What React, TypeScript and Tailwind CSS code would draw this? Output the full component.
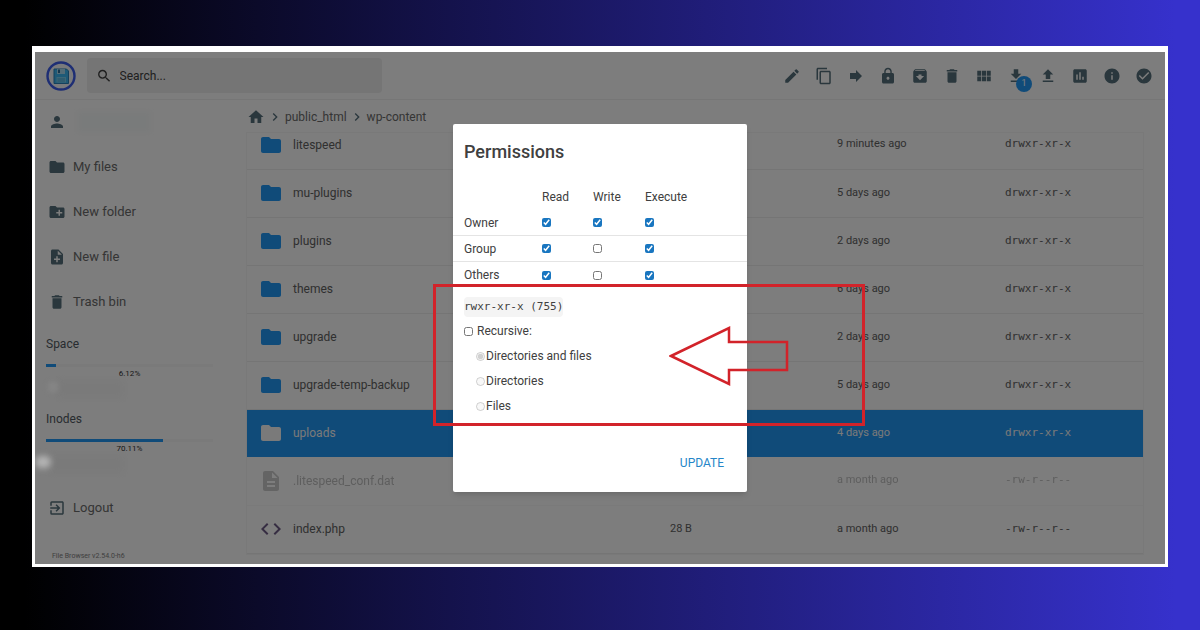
import type { ReactNode } from 'react';
import type { IconType } from 'react-icons';
import {
  MdArchive,
  MdCheckCircle,
  MdChevronRight,
  MdCode,
  MdContentCopy,
  MdCreateNewFolder,
  MdDelete,
  MdDescription,
  MdEdit,
  MdExitToApp,
  MdFileDownload,
  MdFileUpload,
  MdFolder,
  MdForward,
  MdHome,
  MdInfo,
  MdInsertChart,
  MdLock,
  MdNoteAdd,
  MdPerson,
  MdSearch,
  MdViewModule,
} from 'react-icons/md';

interface FileItem {
  name: string;
  kind: 'folder' | 'doc' | 'code';
  size?: string;
  modified: string;
  mode: string;
  selected?: boolean;
  hidden?: boolean;
}

const files: FileItem[] = [
  { name: 'litespeed', kind: 'folder', modified: '9 minutes ago', mode: 'drwxr-xr-x' },
  { name: 'mu-plugins', kind: 'folder', modified: '5 days ago', mode: 'drwxr-xr-x' },
  { name: 'plugins', kind: 'folder', modified: '2 days ago', mode: 'drwxr-xr-x' },
  { name: 'themes', kind: 'folder', modified: '6 days ago', mode: 'drwxr-xr-x' },
  { name: 'upgrade', kind: 'folder', modified: '2 days ago', mode: 'drwxr-xr-x' },
  { name: 'upgrade-temp-backup', kind: 'folder', modified: '5 days ago', mode: 'drwxr-xr-x' },
  { name: 'uploads', kind: 'folder', modified: '4 days ago', mode: 'drwxr-xr-x', selected: true },
  { name: '.litespeed_conf.dat', kind: 'doc', modified: 'a month ago', mode: '-rw-r--r--', hidden: true },
  { name: 'index.php', kind: 'code', size: '28 B', modified: 'a month ago', mode: '-rw-r--r--' },
];

const actions: { label: string; icon: IconType; badge?: number }[] = [
  { label: 'Rename', icon: MdEdit },
  { label: 'Copy', icon: MdContentCopy },
  { label: 'Move', icon: MdForward },
  { label: 'Permissions', icon: MdLock },
  { label: 'Archive', icon: MdArchive },
  { label: 'Delete', icon: MdDelete },
  { label: 'Switch view', icon: MdViewModule },
  { label: 'Download', icon: MdFileDownload, badge: 1 },
  { label: 'Upload', icon: MdFileUpload },
  { label: 'Usage', icon: MdInsertChart },
  { label: 'Info', icon: MdInfo },
  { label: 'Select', icon: MdCheckCircle },
];

const permissions = [
  { who: 'Owner', read: true, write: true, execute: true },
  { who: 'Group', read: true, write: false, execute: true },
  { who: 'Others', read: true, write: false, execute: true },
];

function Logo() {
  return (
    <svg viewBox="0 0 30 30" className="size-[30px] shrink-0" aria-hidden="true">
      <circle cx="15" cy="15" r="13.5" fill="#f2f4f8" stroke="#3c5ce8" strokeWidth="2.400" />
      <path d="M8 8h12.500l2 2v12.500h-14.500z" fill="#3cb4ee" stroke="#2a80b8" strokeWidth="1" />
      <path d="M11 8h8v5h-8z" fill="#a8d8ee" />
      <path d="M12 8.500h2v3.500h-2z" fill="#2a6c98" />
      <path d="M10.500 16h9.500v5.500h-9.500z" fill="#7accec" />
      <path d="M11.500 18h7.500M11.500 20h7.500" stroke="#3a9ccc" strokeWidth="0.800" />
    </svg>
  );
}

function NavItem({ icon: Icon, children }: { icon: IconType; children: ReactNode }) {
  return (
    <a href="#" className="flex h-[45px] items-center gap-[7px] pl-[13px] text-[13px] text-[#6a6a6a]">
      <Icon className="size-[18px] text-[#546e7a]" />
      {children}
    </a>
  );
}

function Usage({ label, percent }: { label: string; percent: number }) {
  return (
    <div className="pl-[11px] pr-[34px]">
      <p className="text-xs leading-4 text-[#505860]">{label}</p>
      <div className="mt-3 h-[3px] bg-[#f4f4f4]">
        <div className="h-full bg-[#2196f3]" style={{ width: `${percent}%` }} />
      </div>
      <p className="text-center text-[8px] leading-[14px] text-[#303030]">{percent}%</p>
    </div>
  );
}

function Sidebar() {
  return (
    <nav className="w-[212px] shrink-0">
      <div className="flex h-[44px] items-center gap-3 pl-[13px]">
        <MdPerson className="size-[18px] text-[#546e7a]" />
        <span className="h-5 w-18 bg-[#f3f6f6] blur-[2px]" />
      </div>
      <NavItem icon={MdFolder}>My files</NavItem>
      <NavItem icon={MdCreateNewFolder}>New folder</NavItem>
      <NavItem icon={MdNoteAdd}>New file</NavItem>
      <NavItem icon={MdDelete}>Trash bin</NavItem>
      <div className="pt-3">
        <Usage label="Space" percent={6.12} />
        <div className="flex h-[30px] items-start pl-3">
          <span className="relative z-20 size-3 rounded-full bg-[#848484] blur-[2px]" />
          <span className="h-4 w-16 bg-[#f4f4f4] blur-[3px]" />
        </div>
        <Usage label="Inodes" percent={70.11} />
      </div>
      <div className="flex h-[29px] items-start">
        {/* smudge stays brighter than the dimmed page */}
        <span className="relative z-20 h-3 w-4 rounded-full bg-[#b4b4b4] blur-[3px]" />
        <span className="h-4 w-18 bg-[#f4f4f4] blur-[3px]" />
      </div>
      <NavItem icon={MdExitToApp}>Logout</NavItem>
      <p className="mt-5 pl-[17px] text-[7px] leading-3 text-[#808080]">File Browser v2.54.0-h6</p>
    </nav>
  );
}

function Breadcrumbs() {
  return (
    <div className="flex h-[33px] items-center gap-0.5 text-xs text-[#6a6a6a]">
      <a href="#" aria-label="Home">
        <MdHome className="size-[18px] text-[#546e7a]" />
      </a>
      <MdChevronRight className="size-4 text-[#546e7a]" />
      <a href="#">public_html</a>
      <MdChevronRight className="size-4 text-[#546e7a]" />
      <a href="#">wp-content</a>
    </div>
  );
}

function FileIcon({ item }: { item: FileItem }) {
  if (item.kind === 'doc') return <MdDescription className="size-6 text-[#808080]" />;
  if (item.kind === 'code') return <MdCode className="size-6 text-[#6c5a84]" />;
  return <MdFolder className={item.selected ? 'size-6 text-[#f4f4f4]' : 'size-6 text-[#2196f3]'} />;
}

function rowClass(item: FileItem) {
  if (item.selected) return 'h-12 bg-[#2196f3] text-[#f4f4f4]';
  if (item.hidden) return 'h-12 border-b border-[#f4f4f4] text-[#606060]';
  return 'h-12 border-b border-[#eaeaea] text-[#606060]';
}

function Listing() {
  return (
    <div className="overflow-hidden ring-1 ring-[#f3f3f3]">
      {/* scrolled a little, so the first row is partly under the breadcrumbs */}
      <table className="-mt-3 w-full table-fixed border-collapse text-left text-xs">
        <colgroup>
          <col />
          <col className="w-[167px]" />
          <col className="w-[168px]" />
          <col className="w-[138px]" />
        </colgroup>
        <tbody>
          {files.map((item) => (
            <tr key={item.name} className={rowClass(item)}>
              <td className="pl-3">
                <div className={item.hidden ? 'flex items-center gap-[10px] opacity-40' : 'flex items-center gap-[10px]'}>
                  <FileIcon item={item} />
                  {item.name}
                </div>
              </td>
              <td className="text-[11px]">{item.size}</td>
              <td className={item.hidden ? 'text-[11px] opacity-40' : 'text-[11px]'}>{item.modified}</td>
              <td className={item.hidden ? "font-['DejaVu_Sans_Mono',monospace] text-[11px] opacity-40" : "font-['DejaVu_Sans_Mono',monospace] text-[11px]"}>
                {item.mode}
              </td>
            </tr>
          ))}
        </tbody>
      </table>
    </div>
  );
}

function Header() {
  return (
    <header className="flex h-12 items-center justify-between border-b border-[#ececec] pl-[11px] pr-[5px]">
      <div className="flex items-center gap-[11px]">
        <Logo />
        <label className="flex h-[35px] w-[295px] items-center gap-[7px] rounded-sm bg-[#eaeaea] pl-[9px]">
          <MdSearch className="size-[18px] text-[#404040]" />
          <input
            type="text"
            aria-label="Search"
            placeholder="Search..."
            className="w-full bg-transparent text-xs outline-none placeholder:text-[#404040]"
          />
        </label>
      </div>
      <div className="flex">
        {actions.map(({ label, icon: Icon, badge }) => (
          <button key={label} type="button" aria-label={label} className="relative flex size-8 items-center justify-center text-[#546e7a]">
            <Icon className="size-[18px]" />
            {badge && (
              <span className="absolute bottom-0 right-0 flex size-4 items-center justify-center rounded-full bg-[#2196f3] text-[9px] text-white">
                {badge}
              </span>
            )}
          </button>
        ))}
      </div>
    </header>
  );
}

function Check({ label, checked }: { label: string; checked: boolean }) {
  return <input type="checkbox" aria-label={label} defaultChecked={checked} className="block size-[9px] accent-[#1976c0]" />;
}

function PermissionsDialog() {
  return (
    <div role="dialog" aria-labelledby="dialog-title" className="relative w-[294px] rounded-[2px] bg-white pb-[13px] pt-4 text-xs text-[#404040] shadow-md">
      <h2 id="dialog-title" className="mb-5 pl-[11px] text-lg font-medium leading-6 text-[#404040]">
        Permissions
      </h2>
      <table className="w-full table-fixed border-collapse text-left">
        <thead>
          <tr className="h-[26px]">
            <td className="w-[89px]" />
            <th scope="col" className="w-[51px] font-normal">Read</th>
            <th scope="col" className="w-[52px] font-normal">Write</th>
            <th scope="col" className="font-normal">Execute</th>
          </tr>
        </thead>
        <tbody>
          {permissions.map((row) => (
            <tr key={row.who} className="h-[26px] border-b border-[#e4e4e4] last:border-b-0">
              <th scope="row" className="pl-[11px] font-normal">{row.who}</th>
              <td><Check label={`${row.who} read`} checked={row.read} /></td>
              <td><Check label={`${row.who} write`} checked={row.write} /></td>
              <td><Check label={`${row.who} execute`} checked={row.execute} /></td>
            </tr>
          ))}
        </tbody>
      </table>

      <div className="pl-[11px] pt-[7px]">
        <p className="flex h-6 items-center">
          <code className="rounded-sm bg-[#f4f4f4] font-['DejaVu_Sans_Mono',monospace] text-[11px] leading-5">rwxr-xr-x (755)</code>
        </p>
        <label className="flex h-[25px] items-center gap-1">
          <input type="checkbox" className="size-[9px]" />
          Recursive:
        </label>
        {['Directories and files', 'Directories', 'Files'].map((option, i) => (
          <label key={option} className="flex h-[25px] items-center gap-px pl-3">
            <input type="radio" name="recursion" disabled defaultChecked={i === 0} className="size-[9px]" />
            {option}
          </label>
        ))}
      </div>

      <div className="mt-7 flex justify-end pr-[15px]">
        <button type="button" className="h-8 px-2 text-xs text-[#2586c8]">UPDATE</button>
      </div>

      {/* annotation: outlined area and arrow */}
      <div className="pointer-events-none absolute left-[-20px] top-[160px] h-[142px] w-[432px] border-[3px] border-[#d2232a]" />
      <svg viewBox="0 0 120 60" className="pointer-events-none absolute left-[216px] top-[202px] h-[60px] w-[120px]" aria-hidden="true">
        <path d="M2 30L60 2V16H118V44H60V58Z" fill="none" stroke="#d2232a" strokeWidth="2.500" />
      </svg>
    </div>
  );
}

export default function App() {
  return (
    <div className="min-h-screen bg-linear-[90deg,#000000_2%,#3631cc_98%] px-8 pb-[63px] pt-[46px] font-[Roboto,sans-serif]">
      <div className="border-[3px] border-t-[6px] border-white">
        <div className="relative overflow-hidden bg-[#fafafa]">
          <Header />
          <div className="flex">
            <Sidebar />
            <main className="min-w-0 grow pb-[10px] pr-[22px]">
              <Breadcrumbs />
              <Listing />
            </main>
          </div>
          <div className="absolute inset-0 z-10 flex items-center justify-center bg-black/50">
            <PermissionsDialog />
          </div>
        </div>
      </div>
    </div>
  );
}
